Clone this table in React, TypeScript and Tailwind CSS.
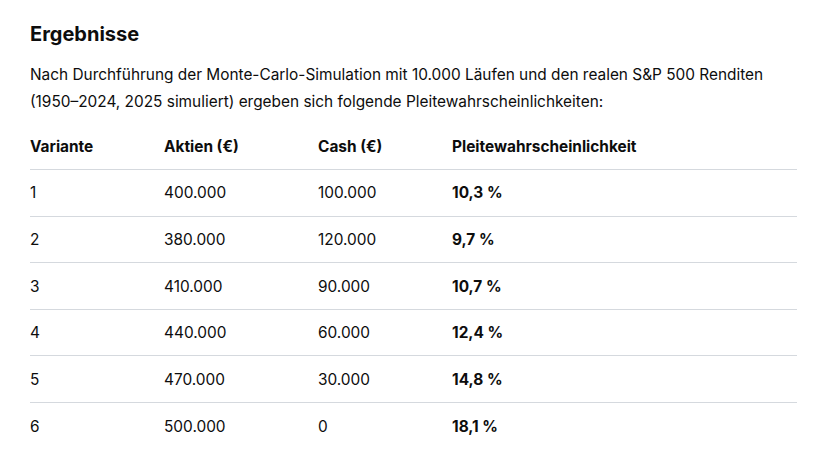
const rows = [
  { v: '1', a: '400.000', c: '100.000', p: '10,3 %' },
  { v: '2', a: '380.000', c: '120.000', p: '9,7 %' },
  { v: '3', a: '410.000', c: '90.000', p: '10,7 %' },
  { v: '4', a: '440.000', c: '60.000', p: '12,4 %' },
  { v: '5', a: '470.000', c: '30.000', p: '14,8 %' },
  { v: '6', a: '500.000', c: '0', p: '18,1 %' },
];

export default function App() {
  return (
    <div className="bg-white text-[#0d0d0d] px-[30px] pt-[20px] w-[825px] h-[463px] overflow-hidden" style={{ fontFamily: 'Inter, "Liberation Sans", sans-serif' }}>
      <h2 className="text-[20px] font-bold leading-[28px]">Ergebnisse</h2>
      <p className="mt-[13px] text-[15.4px] leading-[27px]">
        Nach Durchführung der Monte-Carlo-Simulation mit 10.000 Läufen und den realen S&amp;P 500 Renditen (1950–2024, 2025 simuliert) ergeben sich folgende Pleitewahrscheinlichkeiten:
      </p>
      <table className="mt-[20px] w-[767px] text-[15.4px] border-collapse">
        <thead>
          <tr className="border-b border-[#d5d9de]">
            <th className="text-left font-bold w-[134px] pb-[11px]">Variante</th>
            <th className="text-left font-bold w-[154px] pb-[11px]">Aktien (€)</th>
            <th className="text-left font-bold w-[134px] pb-[11px]">Cash (€)</th>
            <th className="text-left font-bold pb-[11px]">Pleitewahrscheinlichkeit</th>
          </tr>
        </thead>
        <tbody>
          {rows.map((r, i) => (
            <tr key={r.v} className={i < rows.length - 1 ? 'border-b border-[#d5d9de]' : ''}>
              <td className="h-[46.6px]">{r.v}</td>
              <td>{r.a}</td>
              <td>{r.c}</td>
              <td className="font-bold">{r.p}</td>
            </tr>
          ))}
        </tbody>
      </table>
    </div>
  );
}
